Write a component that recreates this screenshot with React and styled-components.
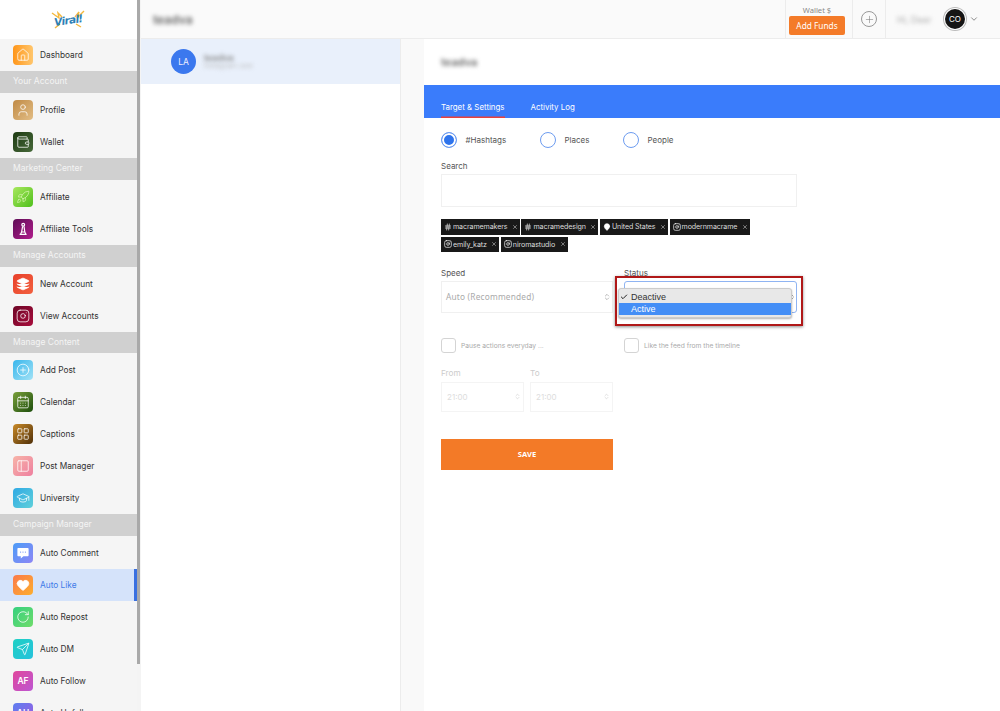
import styled, { createGlobalStyle } from "styled-components";
import {
  House, User, Wallet, Rocket, Layers, Instagram, Plus, CalendarDays, LayoutGrid, PanelLeft,
  GraduationCap, Heart, RotateCw, Send, Hash, MapPin, Check, ChevronDown, X,
  ChevronsUpDown, CirclePlus,
} from "lucide-react";

const GlobalStyle = createGlobalStyle`
  html, body { margin: 0; padding: 0; background: #fff; }
  body { font-family: "Inter", "Liberation Sans", sans-serif; color: #333; height: 711px; overflow: hidden; }
  * { box-sizing: border-box; }
`;

// affiliate tools glyph, lucide has nothing close
const PawnIcon = ({ size, color }) => (
  <svg width={size} height={size} viewBox="0 0 14 14" fill="none" stroke={color} strokeWidth="1.2">
    <circle cx="7.2" cy="2.8" r="1.4" />
    <path d="M6.6 4.4 5.6 10M8 4.4 8.8 10M3.6 12.4h7M4.4 12.4l1.2-2.4h3.2l1.2 2.4" />
  </svg>
);

// white bubble with three dots
const CommentIcon = ({ size }) => (
  <svg width={size} height={size} viewBox="0 0 14 14">
    <path d="M2.4 2h9.2c.6 0 1 .4 1 1v6.2c0 .6-.4 1-1 1H7.4L4.8 12.6v-2.4H2.4c-.6 0-1-.4-1-1V3c0-.6.4-1 1-1z" fill="#fff" />
    <circle cx="4.6" cy="6.1" r=".6" fill="#6d92f6" />
    <circle cx="7" cy="6.1" r=".6" fill="#6d92f6" />
    <circle cx="9.4" cy="6.1" r=".6" fill="#6d92f6" />
  </svg>
);

const menu = [
  { items: [{ label: "Dashboard", icon: House, bg: "linear-gradient(90deg,#ff961a,#ffc66d)" }] },
  { title: "Your Account", items: [
    { label: "Profile", icon: User, bg: "linear-gradient(135deg,#c08a45,#e2bd85)" },
    { label: "Wallet", icon: Wallet, bg: "linear-gradient(135deg,#1d3a12,#47693a)" },
  ] },
  { title: "Marketing Center", items: [
    { label: "Affiliate", icon: Rocket, bg: "linear-gradient(135deg,#a8e85e,#4fbf1c)", tint: "#d8f5b0" },
    { label: "Affiliate Tools", icon: PawnIcon, bg: "linear-gradient(135deg,#5e0d56,#b01c8c)" },
  ] },
  { title: "Manage Accounts", items: [
    { label: "New Account", icon: Layers, bg: "linear-gradient(135deg,#e8402a,#f2603f)", fill: true },
    { label: "View Accounts", icon: Instagram, bg: "linear-gradient(135deg,#6d0626,#a80d3c)" },
  ] },
  { title: "Manage Content", items: [
    { label: "Add Post", icon: CirclePlus, bg: "linear-gradient(135deg,#38b6ec,#a2e2f6)" },
    { label: "Calendar", icon: CalendarDays, bg: "linear-gradient(135deg,#7aa03a,#1c4d0c)" },
    { label: "Captions", icon: LayoutGrid, bg: "linear-gradient(135deg,#c98a28,#4f2f08)" },
    { label: "Post Manager", icon: PanelLeft, bg: "linear-gradient(135deg,#f7b4a8,#ee7f9f)" },
    { label: "University", icon: GraduationCap, bg: "linear-gradient(135deg,#2fa9e4,#5fd0da)" },
  ] },
  { title: "Campaign Manager", items: [
    { label: "Auto Comment", icon: CommentIcon, bg: "linear-gradient(135deg,#4c9cf7,#8d86f5)" },
    { label: "Auto Like", icon: Heart, bg: "linear-gradient(135deg,#fb7a4b,#fdae2d)", fill: true, active: true },
    { label: "Auto Repost", icon: RotateCw, bg: "linear-gradient(135deg,#35d07f,#6fdc6a)" },
    { label: "Auto DM", icon: Send, bg: "linear-gradient(135deg,#1fd0c4,#26c2dc)" },
    { label: "Auto Follow", text: "AF", bg: "linear-gradient(135deg,#e0479c,#bd56d2)" },
    { label: "Auto Unfollow", text: "AU", bg: "linear-gradient(135deg,#5c7ff0,#a05be0)" },
  ] },
];

const tags = [
  { label: "macramemakers", icon: Hash },
  { label: "macramedesign", icon: Hash },
  { label: "United States", icon: MapPin, fill: true },
  { label: "modernmacrame", icon: Instagram },
  { label: "emily_katz", icon: Instagram },
  { label: "niromastudio", icon: Instagram },
];

export default function App() {
  return (
    <Page>
      <GlobalStyle />
      <Sidebar>
        <Nav>
          <LogoBox>
            <Logo>
              <LogoRays viewBox="0 0 34 22">
                <path d="M1 4l7 5-1-5 4 4M33 2l-7 7 2-6-4 5M4 19l5-4M30 18l-5-3" stroke="#f4b83c" strokeWidth="1.4" fill="none" />
              </LogoRays>
              <LogoText>Viral!</LogoText>
            </Logo>
          </LogoBox>
          {menu.map((section, i) => (
            <div key={i}>
              {section.title && <SectionTitle>{section.title}</SectionTitle>}
              {section.items.map((item) => (
                <MenuRow key={item.label} $active={item.active}>
                  <IconTile $bg={item.bg}>
                    {item.icon ? (
                      <item.icon
                        size={14}
                        color={item.tint || "#fff"}
                        strokeWidth={1.3}
                        fill={item.fill ? "#fff" : "none"}
                      />
                    ) : (
                      item.text
                    )}
                  </IconTile>
                  {item.label}
                </MenuRow>
              ))}
            </div>
          ))}
        </Nav>
        <ScrollTrack>
          <ScrollThumb />
        </ScrollTrack>
      </Sidebar>

      <Main>
        <TopBar>
          <PageName>teadva</PageName>
          <WalletBox>
            <WalletLabel>Wallet $</WalletLabel>
            <FundsButton>Add Funds</FundsButton>
          </WalletBox>
          <PlusBox>
            <PlusCircle><Plus size={11} strokeWidth={1.2} color="#777" /></PlusCircle>
          </PlusBox>
          <UserBox>
            <Greeting>Hi, Dear</Greeting>
            <Avatar>CO</Avatar>
            <ChevronDown size={10} color="#777" />
          </UserBox>
        </TopBar>

        <Columns>
          <AccountList>
            <AccountRow>
              <AccountBadge>LA</AccountBadge>
              <div>
                <AccountName>teadva</AccountName>
                <AccountSub>Instagram user</AccountSub>
              </div>
            </AccountRow>
          </AccountList>

          <Panel>
            <PanelTitle>teadva</PanelTitle>
            <TabBar>
              <Tab $active>Target &amp; Settings</Tab>
              <Tab>Activity Log</Tab>
            </TabBar>
            <Form>
              <RadioRow>
                <RadioItem $width={99}><Radio $on /> #Hashtags</RadioItem>
                <RadioItem $width={83}><Radio /> Places</RadioItem>
                <RadioItem><Radio /> People</RadioItem>
              </RadioRow>

              <Label>Search</Label>
              <SearchBox />

              <TagList>
                {tags.map((t) => (
                  <Tag key={t.label}>
                    <t.icon size={8} color="#fff" strokeWidth={2} fill={t.fill ? "#fff" : "none"} />
                    {t.label}
                    <TagClose size={6} color="#ddd" strokeWidth={2} />
                  </Tag>
                ))}
              </TagList>

              <FieldGrid>
                <div>
                  <Label>Speed</Label>
                  <SelectBox>
                    <SelectText>Auto (Recommended)</SelectText>
                    <ChevronsUpDown size={8} color="#999" />
                  </SelectBox>
                </div>
                <StatusField>
                  <Label>Status</Label>
                  <SelectBox $focus>
                    <ChevronsUpDown size={6} color="#555" />
                  </SelectBox>
                  <Highlight>
                    <Dropdown>
                      <Option><Check size={8} strokeWidth={3} color="#222" /> Deactive</Option>
                      <Option $selected>Active</Option>
                    </Dropdown>
                  </Highlight>
                </StatusField>
              </FieldGrid>

              <CheckGrid>
                <CheckItem><CheckBox /> Pause actions everyday ...</CheckItem>
                <CheckItem><CheckBox /> Like the feed from the timeline</CheckItem>
              </CheckGrid>

              <TimeRow>
                <div>
                  <FadedLabel>From</FadedLabel>
                  <TimeBox>21:00<ChevronsUpDown size={7} color="#ccc" /></TimeBox>
                </div>
                <div>
                  <FadedLabel>To</FadedLabel>
                  <TimeBox>21:00<ChevronsUpDown size={7} color="#ccc" /></TimeBox>
                </div>
              </TimeRow>

              <SaveButton>SAVE</SaveButton>
            </Form>
          </Panel>
        </Columns>
      </Main>
    </Page>
  );
}

const Page = styled.div`
  display: flex;
  width: 1000px;
  height: 711px;
  overflow: hidden;
`;

const Sidebar = styled.aside`
  display: flex;
  flex: 0 0 141px;
  height: 711px;
  background: #f6f6f6;
`;

const Nav = styled.nav`
  width: 137px;
  height: 711px;
  overflow: hidden;
  background: #f5f5f5;
`;

const LogoBox = styled.div`
  display: flex;
  justify-content: center;
  align-items: center;
  height: 39.2px;
  background: #fff;
  padding-right: 1px;
`;

const Logo = styled.div`
  position: relative;
  width: 34px;
  height: 22px;
  display: flex;
  align-items: center;
  justify-content: center;
`;

const LogoRays = styled.svg`
  position: absolute;
  inset: 0;
  width: 34px;
  height: 22px;
`;

const LogoText = styled.span`
  position: relative;
  font-family: "DejaVu Sans", sans-serif;
  font-size: 10.5px;
  font-weight: 700;
  font-style: italic;
  letter-spacing: -0.6px;
  color: #2f7fb5;
  transform: rotate(-8deg);
`;

const SectionTitle = styled.div`
  height: 21.8px;
  margin-bottom: 1px;
  padding-left: 13px;
  background: #d0d0d0;
  color: #f4f4f4;
  font-size: 8.5px;
  line-height: 21px;
`;

const MenuRow = styled.div`
  display: flex;
  align-items: center;
  gap: 7px;
  height: 32px;
  padding-left: 13px;
  font-size: 8.3px;
  color: ${(p) => (p.$active ? "#3f7be8" : "#333")};
  background: ${(p) => (p.$active ? "#d5e3fa" : "transparent")};
  box-shadow: ${(p) => (p.$active ? "inset -3px 0 0 #3a70e0" : "none")};
`;

const IconTile = styled.span`
  display: flex;
  align-items: center;
  justify-content: center;
  width: 20px;
  height: 20px;
  border-radius: 4px;
  background: ${(p) => p.$bg};
  color: #fff;
  font-size: 8.5px;
  font-weight: 600;
`;

const ScrollTrack = styled.div`
  width: 4px;
  height: 711px;
  background: #f4f4f4;
`;

const ScrollThumb = styled.div`
  width: 3px;
  height: 664px;
  background: #a9a9a9;
`;

const Main = styled.div`
  display: flex;
  flex-direction: column;
  flex: 1;
  min-width: 0;
`;

const TopBar = styled.header`
  display: flex;
  align-items: stretch;
  height: 39px;
  padding-left: 12px;
  background: #fafafa;
  border-bottom: 1px solid #ececec;
`;

const blurred = `
  filter: blur(2px);
  user-select: none;
`;

const PageName = styled.div`
  ${blurred}
  flex: 1;
  align-self: center;
  font-size: 12px;
  font-weight: 600;
  color: #666;
`;

const WalletBox = styled.div`
  display: flex;
  flex-direction: column;
  align-items: center;
  width: 67px;
  padding: 5px 4px 0 0;
  border-left: 1px solid #ececec;
`;

const WalletLabel = styled.div`
  font-family: "Noto Sans", sans-serif;
  font-size: 7.6px;
  line-height: 10px;
  color: #888;
`;

const FundsButton = styled.button`
  width: 56px;
  height: 19px;
  margin-top: 1px;
  padding: 0;
  border: 0;
  border-radius: 2px;
  background: #f47b29;
  color: #fff;
  font-family: "Noto Sans", sans-serif;
  font-size: 8.3px;
`;

const PlusBox = styled.div`
  display: flex;
  align-items: center;
  justify-content: center;
  width: 34px;
  border-left: 1px solid #ececec;
  border-right: 1px solid #ececec;
`;

const PlusCircle = styled.span`
  display: flex;
  align-items: center;
  justify-content: center;
  width: 16px;
  height: 16px;
  border: 1px solid #999;
  border-radius: 50%;
`;

const UserBox = styled.div`
  display: flex;
  align-items: center;
  width: 114px;
  padding-left: 11px;
`;

const Greeting = styled.span`
  ${blurred}
  width: 48px;
  font-size: 9px;
  color: #aaa;
`;

const Avatar = styled.span`
  display: flex;
  align-items: center;
  justify-content: center;
  width: 20px;
  height: 20px;
  margin-right: 4px;
  border-radius: 50%;
  background: #151515;
  box-shadow: 0 0 0 1px #fff, 0 0 0 2px #bbb;
  color: #fff;
  font-size: 8px;
`;

const Columns = styled.div`
  display: flex;
  flex: 1;
  background: #f9f9f9;
`;

const AccountList = styled.section`
  width: 260px;
  background: #fff;
  border-right: 1px solid #ececec;
`;

const AccountRow = styled.div`
  display: flex;
  align-items: center;
  gap: 8px;
  height: 45px;
  padding-left: 30px;
  background: #e9f0fb;
`;

const AccountBadge = styled.span`
  display: flex;
  align-items: center;
  justify-content: center;
  width: 25px;
  height: 25px;
  border-radius: 50%;
  background: #3b78ee;
  color: #eef;
  font-size: 8.5px;
`;

const AccountName = styled.div`
  ${blurred}
  font-size: 9px;
  font-weight: 600;
  line-height: 9px;
  color: #888;
`;

const AccountSub = styled.div`
  ${blurred}
  font-size: 7px;
  line-height: 8px;
  color: #bbb;
`;

const Panel = styled.section`
  width: 576px;
  margin-left: 23px;
  background: #fff;
`;

const PanelTitle = styled.div`
  ${blurred}
  display: flex;
  align-items: center;
  height: 46px;
  padding: 0 0 1px 17px;
  font-size: 11px;
  font-weight: 600;
  color: #666;
`;

const TabBar = styled.div`
  display: flex;
  gap: 26px;
  height: 33px;
  padding-left: 17px;
  background: #3a7cfb;
`;

const Tab = styled.div`
  display: flex;
  align-items: center;
  height: 33px;
  padding-top: 11px;
  font-size: 7.9px;
  color: #fff;
  box-shadow: ${(p) => (p.$active ? "inset 0 -1.5px 0 #e8413c" : "none")};
`;

const Form = styled.div`
  width: 373px;
  padding: 14px 0 0 17px;
`;

const RadioRow = styled.div`
  display: flex;
  height: 16px;
  margin-bottom: 12px;
`;

const RadioItem = styled.label`
  display: flex;
  align-items: center;
  gap: 8.5px;
  width: ${(p) => (p.$width ? `${p.$width}px` : "auto")};
  font-size: 8px;
  color: #555;
`;

const Radio = styled.span`
  width: 16px;
  height: 16px;
  border: 1px solid #6d9cf0;
  border-radius: 50%;
  background: ${(p) => (p.$on ? "#2f74ec" : "#fff")};
  box-shadow: ${(p) => (p.$on ? "inset 0 0 0 2px #fff" : "none")};
`;

const Label = styled.div`
  height: 14px;
  font-size: 8px;
  line-height: 12px;
  color: #555;
`;

const SearchBox = styled.div`
  width: 356px;
  height: 33px;
  border: 1px solid #f0f0f0;
`;

const TagList = styled.div`
  display: flex;
  flex-wrap: wrap;
  gap: 2px 1.5px;
  height: 33px;
  margin-top: 12px;
`;

const Tag = styled.span`
  display: flex;
  align-items: center;
  gap: 1px;
  height: 15.5px;
  padding: 0 2px 0 3px;
  background: #191919;
  color: #ddd;
  font-size: 7.1px;
  letter-spacing: -0.1px;
`;

const TagClose = styled(X)`
  margin-left: 3.5px;
`;

const FieldGrid = styled.div`
  display: grid;
  grid-template-columns: 172px 173px;
  column-gap: 11px;
  margin-top: 14.5px;
`;

const StatusField = styled.div`
  position: relative;
`;

const SelectBox = styled.div`
  display: flex;
  align-items: center;
  justify-content: flex-end;
  height: 32px;
  padding: 0 1px 0 4px;
  border: 1px solid ${(p) => (p.$focus ? "#8fb4f2" : "#f0f0f0")};
  border-radius: ${(p) => (p.$focus ? "3px" : "0")};
`;

const SelectText = styled.span`
  flex: 1;
  font-family: "Noto Sans", sans-serif;
  font-size: 8.3px;
  letter-spacing: 0.2px;
  color: #aaa;
`;

const Highlight = styled.div`
  position: absolute;
  top: 9.5px;
  left: -9px;
  width: 188px;
  height: 50px;
  padding: 10px 9.5px 0 1px;
  border: 2px solid #b01818;
  box-shadow: 0 1px 3px rgba(0, 0, 0, 0.45);
`;

const Dropdown = styled.div`
  height: 30px;
  padding-top: 2px;
  border: 1px solid #ccc;
  border-radius: 3px;
  background: #e8e8e8;
  box-shadow: 0 1px 2px rgba(0, 0, 0, 0.3);
`;

const Option = styled.div`
  display: flex;
  align-items: center;
  gap: 3px;
  height: 12px;
  padding-left: ${(p) => (p.$selected ? "12px" : "1px")};
  background: ${(p) => (p.$selected ? "#448ef6" : "transparent")};
  color: ${(p) => (p.$selected ? "#fff" : "#333")};
  font-family: "Liberation Sans", sans-serif;
  font-size: 9px;
`;

const CheckGrid = styled.div`
  display: grid;
  grid-template-columns: 183px 1fr;
  margin-top: 25.5px;
`;

const CheckItem = styled.label`
  display: flex;
  align-items: center;
  gap: 5px;
  font-size: 6.7px;
  color: #aaa;
`;

const CheckBox = styled.span`
  width: 15px;
  height: 15px;
  border: 1px solid #d4d4d4;
  border-radius: 3px;
`;

const TimeRow = styled.div`
  display: grid;
  grid-template-columns: 83px 83px;
  column-gap: 6px;
  margin-top: 13.5px;
`;

const FadedLabel = styled.div`
  height: 15px;
  font-size: 8.2px;
  line-height: 12px;
  color: #ccc;
`;

const TimeBox = styled.div`
  display: flex;
  align-items: center;
  justify-content: space-between;
  height: 30px;
  padding: 0 2px 0 5px;
  border: 1px solid #f4f4f4;
  font-size: 8px;
  color: #ddd;
`;

const SaveButton = styled.button`
  display: block;
  width: 172px;
  height: 31.5px;
  margin-top: 27px;
  padding: 0;
  border: 0;
  background: #f37a27;
  color: #fff;
  font-family: "Noto Sans", sans-serif;
  font-size: 7.6px;
  font-weight: 700;
`;
